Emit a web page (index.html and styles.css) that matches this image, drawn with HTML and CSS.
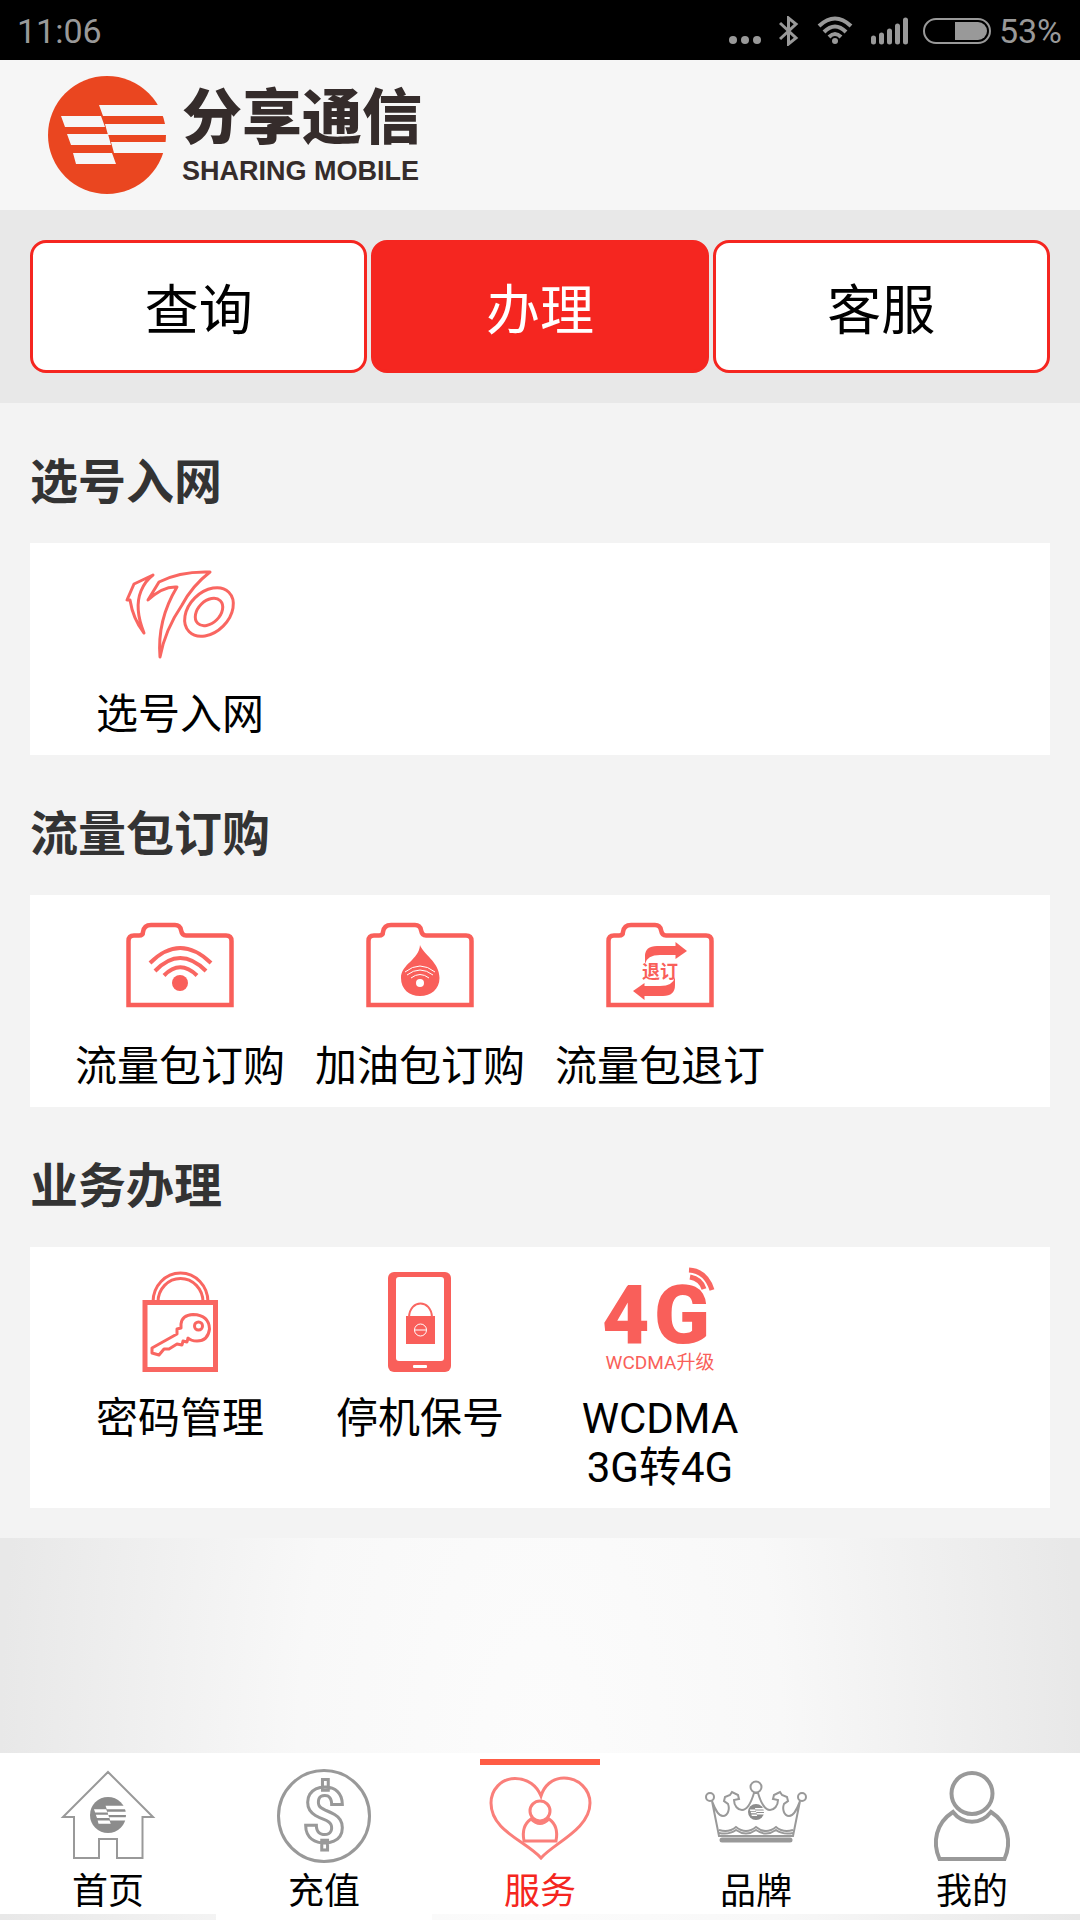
FILE: index.html
```
<!DOCTYPE html>
<html lang="zh-CN">
<head>
    <meta charset="UTF-8">
    <meta name="viewport" content="width=device-width, initial-scale=1">
    <title>分享通信</title>
    <link rel="stylesheet" href="styles.css">
</head>
<body>
<svg class="defs" width="0" height="0" aria-hidden="true">
    <symbol id="mark" viewBox="0 0 118 118">
        <circle class="disc" cx="59" cy="59" r="59"/>
        <path class="stripe" d="M51 29H118V40H55ZM57 48H118V59H60ZM63 66H118V77H66ZM13 40H53L57 51H17ZM19 58H60L63 69H23ZM25 77H64L68 88H28Z"/>
    </symbol>
    <symbol id="folder" viewBox="0 0 110 110">
        <path d="M3.5 95V31Q3.5 25.5 9 25.5H14Q18 25.5 18 22Q19 15 26 15H50Q55 15 56 20Q57 25.5 61 25.5H101Q106.5 25.5 106.5 31V95Z" fill="none" stroke="#f95f5a" stroke-width="4.5"/>
    </symbol>
</svg>

<div class="status">
    <span class="time">11:06</span>
    <svg width="32" height="30" viewBox="0 0 32 30"><circle cx="4" cy="24" r="4"/><circle cx="16" cy="24" r="4"/><circle cx="28" cy="24" r="4"/></svg>
    <svg width="20" height="30" viewBox="0 0 20 30"><path class="line" d="M1 7L17 22L9.5 28V2L17 8L1 23"/></svg>
    <svg width="36" height="30" viewBox="0 0 36 30"><path class="line thick" d="M2 10Q18 -5 34 10M7 16Q18 5 29 16M12 21Q18 15 24 21"/><circle cx="18" cy="25" r="3"/></svg>
    <svg width="37" height="30" viewBox="0 0 37 30"><path class="line bars" d="M2.5 22V26M10.5 19V26M18.500 15V26M26.5 10V26M34.5 4V26"/></svg>
    <span class="battery">
        <svg width="68" height="30" viewBox="0 0 68 30"><rect class="line thin" x="1" y="3" width="66" height="24" rx="12"/><path d="M32 6H55A9 9 0 0 1 55 24H32Z"/></svg>
        <span>53%</span>
    </span>
</div>

<header class="header">
    <svg class="logo" width="118" height="118"><use href="#mark"/></svg>
    <div class="brand">
        <div class="brand-cn">分享通信</div>
        <div class="brand-en">SHARING MOBILE</div>
    </div>
</header>

<div class="tabs">
    <button type="button">查询</button>
    <button type="button" class="active">办理</button>
    <button type="button">客服</button>
</div>

<main class="main">
    <section>
        <h2>选号入网</h2>
        <div class="panel">
            <a class="item" href="#">
                <svg width="110" height="110" viewBox="0 0 110 110">
                    <g class="outline">
                        <path d="M28 17L9 26L2 42H5Q8 61 19 75Q9 50 16 33Q20 23 28 17Z"/>
                        <path d="M23 42L34 24Q55 13 85 14Q67 28 57 47Q40 72 35 99Q32 62 52 29Q38 28 23 42Z"/>
                        <ellipse cx="84" cy="54" rx="28" ry="20" transform="rotate(-45 84 54)"/>
                        <ellipse cx="84" cy="54" rx="16" ry="11" transform="rotate(-45 84 54)"/>
                    </g>
                </svg>
                <span>选号入网</span>
            </a>
        </div>
    </section>

    <section>
        <h2>流量包订购</h2>
        <div class="panel">
            <a class="item" href="#">
                <svg width="110" height="110" viewBox="0 0 110 110">
                    <use href="#folder"/>
                    <path class="outline wave" d="M25 53Q55 23 86 53M30 61Q55 35 81 61M39 65.5Q55 49 72 65.5"/>
                    <circle cx="55" cy="73" r="8"/>
                </svg>
                <span>流量包订购</span>
            </a>
            <a class="item" href="#">
                <svg width="110" height="110" viewBox="0 0 110 110">
                    <use href="#folder"/>
                    <path d="M55 35C58 44 74.5 52 74.5 68C74.5 79 66 86 55 86C44 86 36 79 36 68C36 54 54 50 55 35Z"/>
                    <path class="cut" d="M40 62Q55 50 70 62M42 65Q55 55 68 65M46 68Q55 61 64 68"/>
                    <circle class="white" cx="55" cy="73" r="4"/>
                </svg>
                <span>加油包订购</span>
            </a>
            <a class="item" href="#">
                <svg width="110" height="110" viewBox="0 0 110 110">
                    <use href="#folder"/>
                    <path d="M40 54V46Q40 36 52 36H70.5V32L82 41L70.5 49V45H55Q42 45 40 54Z"/>
                    <path d="M70 67V75Q70 86 58 86H39.5V90L28 81L39.5 73V76H55Q68 76 70 67Z"/>
                    <text class="tiny" x="55" y="68">退订</text>
                </svg>
                <span>流量包退订</span>
            </a>
        </div>
    </section>

    <section>
        <h2>业务办理</h2>
        <div class="panel">
            <a class="item" href="#">
                <svg width="110" height="110" viewBox="0 0 110 110">
                    <g class="outline">
                        <path class="heavy" d="M20 40.5H90.5V107.5H20Z"/>
                        <path d="M28 40A27.5 29 0 0 1 83 40M33 40A22 23 0 0 1 78 40"/>
                        <path d="M56 62Q57 53 68 52.5Q84 53 84.5 67Q83 79 72 79Q66 79 63 76L62 80L58 79L57 83L52 82L44 87L39 87L34 93L27 91V86L52 72V67L56 66Z"/>
                        <circle cx="73.5" cy="64" r="4"/>
                    </g>
                </svg>
                <span>密码管理</span>
            </a>
            <a class="item" href="#">
                <svg width="110" height="110" viewBox="0 0 110 110">
                    <rect x="23" y="10" width="63" height="100" rx="6"/>
                    <rect class="white" x="31" y="15" width="48" height="84" rx="3"/>
                    <rect class="white" x="48" y="103" width="14" height="3" rx="1"/>
                    <rect x="41" y="54" width="29" height="28"/>
                    <path class="outline light" d="M44 55C45 37 66 37 67 55"/>
                    <circle class="cut" cx="55.5" cy="68" r="6"/>
                    <path class="cut" d="M50 68H61"/>
                </svg>
                <span>停机保号</span>
            </a>
            <a class="item" href="#">
                <svg width="110" height="110" viewBox="0 0 110 110">
                    <text class="big" x="-3" y="81">4</text>
                    <text class="big" x="49" y="81">G</text>
                    <path class="outline heavy" d="M84 8Q101 9 107 28M85 15Q96 17 99 27"/>
                    <text class="small" x="55" y="107">WCDMA升级</text>
                </svg>
                <span>WCDMA<br>3G转4G</span>
            </a>
        </div>
    </section>
</main>

<nav class="nav">
    <a href="#">
        <svg width="120" height="110" viewBox="0 0 120 110">
            <path class="light" d="M60 13L105 58H94.5V99H69V80H51V99H26V58H15Z"/>
            <use href="#mark" x="42" y="38" width="36" height="36"/>
        </svg>
        <span>首页</span>
    </a>
    <a href="#">
        <svg width="120" height="110" viewBox="0 0 120 110">
            <circle cx="60" cy="57" r="45.500"/>
            <text class="dollar" x="60" y="83">$</text>
        </svg>
        <span>充值</span>
    </a>
    <a href="#" class="active">
        <svg width="120" height="110" viewBox="0 0 120 110">
            <rect class="bar" width="120" height="6"/>
            <path d="M61 37C57 27 48 19.5 35 19.5C21 19.5 11 31 11 44C11 72 46 82 61 99C74 84 110 70 110 44C110 31 99 19 84 19C72 19 64 27 61 37Z"/>
            <circle cx="60" cy="52" r="10"/>
            <path d="M51 60Q41 67 44 82H76Q79 67 69 60Q60 69 51 60Z"/>
        </svg>
        <span>服务</span>
    </a>
    <a href="#">
        <svg width="120" height="110" viewBox="0 0 120 110">
            <g class="light">
                <circle cx="14" cy="38" r="4"/><circle cx="60" cy="28" r="5.5"/><circle cx="106" cy="38" r="4"/>
                <path d="M16 42L23 77H97L104 42C101 50 98 57 93 57C88 57 86 50 88 45L92 42L91 38L86 36L84 33L78 36L77 40L82 41C82 47 78 51 74 51C69 51 65 44 62 34H58C55 44 51 51 46 51C42 51 38 47 38 41L43 40L42 36L36 33L34 36L29 38L28 42L32 45C34 50 32 57 27 57C22 57 19 50 16 42Z"/>
                <path d="M23 71Q33 74 40 68Q50 76 60 68Q70 76 80 68Q87 74 97 71M23 74Q33 76 40 71Q50 78 60 71Q70 78 80 71Q87 76 97 74"/>
            </g>
            <path class="base" d="M26 81H94"/>
            <use href="#mark" x="52" y="45" width="16" height="16"/>
        </svg>
        <span>品牌</span>
    </a>
    <a href="#">
        <svg width="120" height="110" viewBox="0 0 120 110">
            <circle class="heavy" cx="60" cy="34.5" r="20.5"/>
            <path class="heavy" d="M41 53C24 64 20 83 27.5 100H92.5C100 83 96 64 79 53C69 66 51 66 41 53Z"/>
        </svg>
        <span>我的</span>
    </a>
</nav>
</body>
</html>
```
FILE: styles.css
```
* {
    box-sizing: border-box;
}

body {
    margin: 0;
    min-height: 100vh;
    display: flex;
    flex-direction: column;
    font-family: Roboto, "Noto Sans CJK SC", sans-serif;
    color: #000;
    background: radial-gradient(ellipse 50% 65% at 50% 93%, #fcfcfc, #f8f8f8 45%, #e8e8e8);
}

a {
    color: inherit;
    text-decoration: none;
}

svg {
    display: block;
}

.defs {
    position: absolute;
}

/* 状态栏 */
.status {
    height: 60px;
    padding: 2px 18px 0 17px;
    display: flex;
    align-items: center;
    gap: 18px;
    background: #000;
    color: #999;
    fill: #999;
    font-size: 34px;
}

.status .time {
    margin-right: auto;
}

.status .battery {
    display: flex;
    align-items: center;
    gap: 8px;
    margin-left: -3px;
}

.status .line {
    fill: none;
    stroke: #999;
    stroke-width: 3;
}

.status .thick {
    stroke-width: 4;
}

.status .thin {
    stroke-width: 2;
}

.status .bars {
    stroke-width: 5;
    stroke-linecap: round;
}

/* 头部 */
.header {
    height: 150px;
    padding: 0 48px;
    display: flex;
    align-items: center;
    gap: 16px;
    background: #f6f6f6;
}

.logo {
    color: #ea4620;
    --stripe: #f6f6f6;
}

.disc {
    fill: currentColor;
    stroke: none;
}

.stripe {
    fill: var(--stripe);
    stroke: none;
}

.brand {
    padding-top: 4px;
    color: #352c2b;
}

.brand-cn {
    font-size: 60px;
    line-height: 64px;
    font-weight: 900;
}

.brand-en {
    margin-top: 4px;
    font: bold 27px/32px "Liberation Sans", sans-serif;
}

/* 标签 */
.tabs {
    padding: 30px;
    display: flex;
    gap: 4px;
    background: #e8e8e8;
}

.tabs button {
    flex: 1;
    height: 133px;
    padding: 0;
    border: 3px solid #f52620;
    border-radius: 16px;
    background: #fff;
    color: #000;
    font: 54px/64px "Noto Sans CJK SC", sans-serif;
}

.tabs .active {
    background: #f52620;
    color: #fff;
}

/* 内容 */
.main {
    padding: 0 30px 30px;
    background: #f3f3f3;
}

.main h2 {
    margin: 0;
    padding: 48px 0 28px;
    color: #333;
    font-size: 48px;
    line-height: 64px;
}

.panel {
    padding: 15px 30px 16px;
    display: flex;
    background: #fff;
}

.item {
    width: 240px;
    display: flex;
    flex-direction: column;
    align-items: center;
    gap: 22px;
    font-size: 42px;
    line-height: 49px;
    text-align: center;
}

.item svg {
    fill: #f95f5a;
    overflow: visible;
}

.item .outline {
    fill: none;
    stroke: #f96661;
    stroke-width: 3;
    stroke-linejoin: round;
}

.item .wave {
    stroke-width: 4;
}

.item .heavy {
    stroke-width: 5;
    stroke-linejoin: miter;
}

.item .light {
    stroke-width: 2;
}

.item .cut {
    fill: none;
    stroke: #fff;
    stroke-width: 1;
}

.item .white {
    fill: #fff;
}

.item text {
    text-anchor: middle;
}

.item .tiny {
    font-size: 18px;
    font-weight: bold;
}

.item .small {
    font-size: 19px;
}

.item .big {
    font-size: 82px;
    font-weight: 900;
    text-anchor: start;
}

/* 底部导航 */
.nav {
    margin-top: auto;
    padding-bottom: 6px;
    display: flex;
    align-items: flex-start;
}

.nav a {
    flex: 1;
    padding-top: 6px;
    display: flex;
    flex-direction: column;
    align-items: center;
    gap: 2px;
    background: #fff;
    font-size: 36px;
    line-height: 43px;
}

.nav a:nth-child(2) {
    margin-bottom: -6px;
    padding-bottom: 6px;
}

.nav svg {
    fill: none;
    stroke: #999;
    stroke-width: 3;
    color: #8c8c8c;
    --stripe: #fff;
}

.nav .light {
    stroke-width: 2;
}

.nav .heavy {
    stroke-width: 4;
}

.nav .base {
    stroke-width: 5;
    stroke-linecap: round;
}

.nav .dollar {
    font: bold 76px Roboto, sans-serif;
    text-anchor: middle;
}

.nav .active {
    color: #f52620;
}

.nav .active svg {
    stroke: #fa7f7a;
}

.nav .bar {
    fill: #ff5c45;
    stroke: none;
}
```
